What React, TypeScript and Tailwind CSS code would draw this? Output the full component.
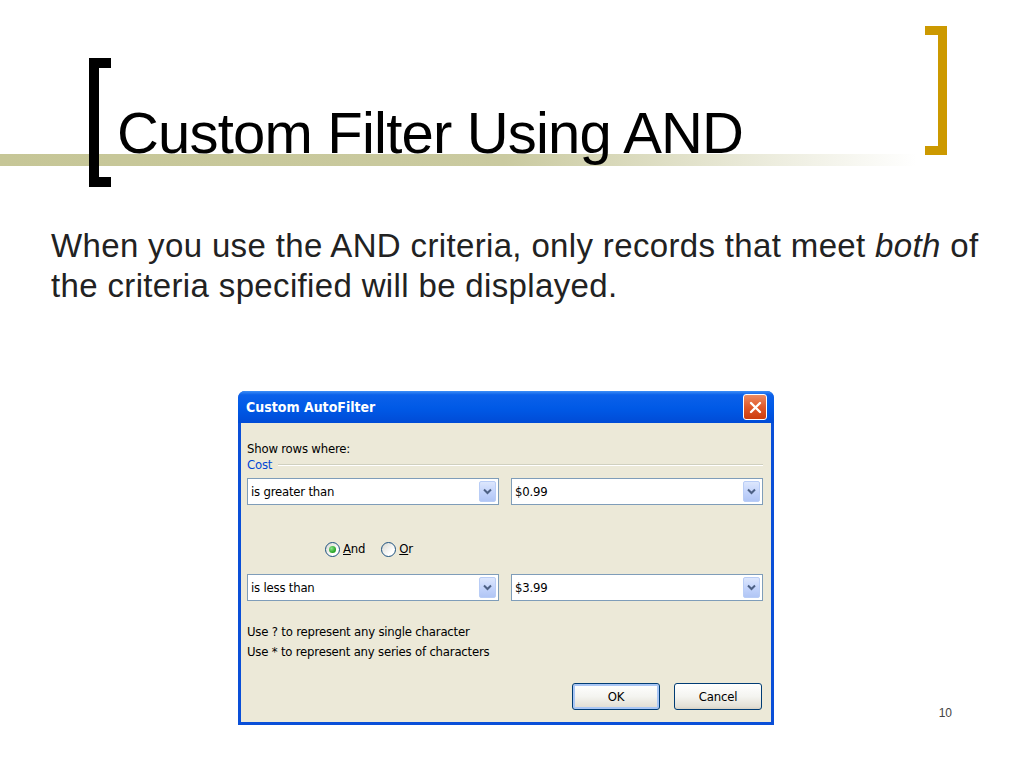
import { ReactNode } from 'react';

const xpFont = "font-['Tahoma','DejaVu_Sans_Condensed','DejaVu_Sans',sans-serif]";

function Chevron() {
  return (
    <svg width="9" height="7" viewBox="0 0 9 7">
      <path d="M1 1.5 L4.5 5 L8 1.5" fill="none" stroke="#4d6185" strokeWidth="2" />
    </svg>
  );
}

function Combo({ value }: { value: string }) {
  return (
    <div className="h-[27px] flex items-stretch border border-[#7f9db9] bg-white">
      <span className="flex-1 flex items-center pl-[3px] text-[13px] text-black">{value}</span>
      <div className="w-[17px] my-[2px] mr-[2px] flex items-center justify-center rounded-[2px] border border-[#b9cdf6] bg-[linear-gradient(to_bottom,#dde7fd,#c2d3fb_55%,#b1c6f5)]">
        <Chevron />
      </div>
    </div>
  );
}

function Radio({ checked, children }: { checked?: boolean; children: ReactNode }) {
  return (
    <label className="flex items-center gap-[3px]">
      <span className="w-[15px] h-[15px] rounded-full border border-[#1c5180] bg-[linear-gradient(135deg,#d8d8d0,#ffffff_70%)] flex items-center justify-center">
        {checked && <span className="w-[7px] h-[7px] rounded-full bg-[radial-gradient(circle_at_35%_35%,#8ce48c,#21a121_70%)]" />}
      </span>
      <span className="text-[13px] text-black">{children}</span>
    </label>
  );
}

function XpButton({ label, isDefault }: { label: string; isDefault?: boolean }) {
  return (
    <button
      className={`h-[27px] w-[88px] rounded-[3px] border border-[#003c74] text-[13px] text-black bg-[linear-gradient(to_bottom,#ffffff,#f4f4f0_50%,#e3e0d6_90%,#d6d0c5)] ${
        isDefault ? 'shadow-[inset_0_0_0_2px_#a9c6f5]' : ''
      }`}
    >
      {label}
    </button>
  );
}

export default function App() {
  return (
    <div className="relative w-[1024px] h-[768px] overflow-hidden bg-white font-['Liberation_Sans',Arial,sans-serif]">
      {/* olive rule behind the title */}
      <div className="absolute left-0 top-[154px] h-[12px] w-[917px] bg-[linear-gradient(to_right,#c6c697_0%,#cacaa0_55%,#ffffff_100%)]" />

      {/* Title */}
      <header className="relative flex items-start h-[200px]">
        <div className="ml-[89px] mt-[58px] w-[22px] h-[129px] border-l-[10px] border-y-[10px] border-black" />
        <h1 className="ml-[6px] mt-[104px] text-[58px] leading-[58px] tracking-[-0.8px] text-black whitespace-nowrap">
          Custom Filter Using AND
        </h1>
        <div className="ml-auto mr-[77px] mt-[26px] w-[22px] h-[129px] border-r-[9px] border-y-[9px] border-[#cc9900]" />
      </header>

      {/* Body text */}
      <p className="mt-[26px] pl-[51px] h-[80px] text-[33px] leading-[40px] tracking-[0.35px] text-[#222] whitespace-nowrap">
        When you use the AND criteria, only records that meet <i>both</i> of
        <br />
        the criteria specified will be displayed.
      </p>

      {/* Dialog + page number */}
      <div className="mt-[85px] flex items-end">
        <div className={`ml-[238px] w-[536px] rounded-t-[7px] bg-[#0a4fd8] flex flex-col ${xpFont}`}>
          <div className="h-[32px] flex items-center justify-between pl-[8px] pr-[7px] rounded-t-[7px] bg-[linear-gradient(to_bottom,#3d8ff7_0%,#0b61ea_12%,#0059e6_55%,#004bd6_100%)]">
            <span className="text-[14px] font-bold text-white">Custom AutoFilter</span>
            <div className="w-[24px] h-[26px] rounded-[3px] border border-white bg-[linear-gradient(to_bottom,#ec8c64,#e0592a_50%,#cc3c0e)] flex items-center justify-center">
              <svg width="13" height="13" viewBox="0 0 13 13">
                <path d="M2 2 L11 11 M11 2 L2 11" stroke="white" strokeWidth="2.4" strokeLinecap="round" />
              </svg>
            </div>
          </div>

          <div className="mx-[3px] mb-[3px] bg-[#ece9d8] pl-[6px] pr-[8px] pt-[18px] pb-[12px] text-[13px] tracking-[-0.2px] text-black">
            <div className="leading-[16px]">Show rows where:</div>
            <div className="flex items-center leading-[16px]">
              <span className="text-[#0046d5]">Cost</span>
              <span className="flex-1 ml-[6px] h-[2px] border-t border-[#d0d0bf] border-b border-b-white" />
            </div>

            <div className="mt-[5px] grid grid-cols-2 gap-[12px]">
              <Combo value="is greater than" />
              <Combo value="$0.99" />
            </div>

            <div className="mt-[35px] h-[18px] flex items-center gap-[16px] pl-[78px]">
              <Radio checked>
                <span className="underline">A</span>nd
              </Radio>
              <Radio>
                <span className="underline">O</span>r
              </Radio>
            </div>

            <div className="mt-[16px] grid grid-cols-2 gap-[12px]">
              <Combo value="is less than" />
              <Combo value="$3.99" />
            </div>

            <div className="mt-[21px] leading-[20px]">
              <div>Use ? to represent any single character</div>
              <div>Use * to represent any series of characters</div>
            </div>

            <div className="mt-[21px] flex justify-end gap-[14px] pr-[1px]">
              <XpButton label="OK" isDefault />
              <XpButton label="Cancel" />
            </div>
          </div>
        </div>

        <span className="ml-auto mr-[72px] mb-[4px] text-[12px] leading-[16px] text-[#444]">10</span>
      </div>
    </div>
  );
}
